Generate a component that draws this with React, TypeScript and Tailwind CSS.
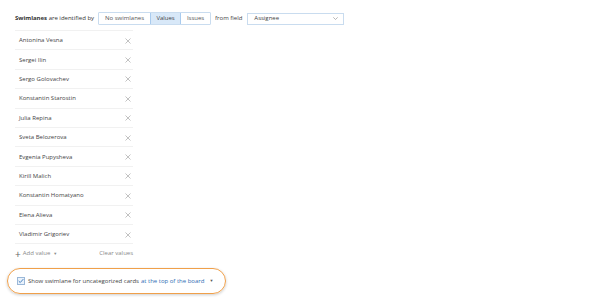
import React from "react";

const names = [
  "Antonina Vesna",
  "Sergei Ilin",
  "Sergo Golovachev",
  "Konstantin Starostin",
  "Julia Repina",
  "Sveta Belozerova",
  "Evgenia Pupysheva",
  "Kirill Malich",
  "Konstantin Homatyano",
  "Elena Alieva",
  "Vladimir Grigoriev",
];

function XIcon() {
  return (
    <svg width="6" height="6" viewBox="0 0 6 6" className="block">
      <path d="M0.5 0.5 L5.5 5.5 M5.5 0.5 L0.5 5.5" stroke="#a8a8a8" strokeWidth="0.7" fill="none" />
    </svg>
  );
}

function Line() {
  return (
    <svg width="118" height="1" viewBox="0 0 118 1" className="block">
      <rect x="0" y="0" width="118" height="1" fill="#f1f1f1" />
    </svg>
  );
}

export default function App() {
  return (
    <div
      className="w-[600px] h-[308px] bg-white text-[6px] text-[#444] overflow-hidden whitespace-nowrap"
      style={{ fontFamily: '"Open Sans", "Noto Sans", sans-serif' }}
    >
      <div className="pl-[15px] pt-[12px] flex items-center h-[13px] box-content">
        <span className="text-[#333]">
          <span className="font-bold">Swimlanes</span> are identified by
        </span>
        <div className="ml-[4px] flex h-[13px] border border-[#c9dcef] rounded-[1px]">
          <div className="w-[51px] flex items-center justify-center text-[#555]">No swimlanes</div>
          <div className="w-[31px] flex items-center justify-center bg-[#d8e8f8] border-0 border-x border-[#a9cbee] text-[#444]">Values</div>
          <div className="w-[29px] flex items-center justify-center text-[#555]">Issues</div>
        </div>
        <span className="ml-[4px] text-[#444]">from field</span>
        <div className="ml-[5px] w-[97px] h-[12px] border border-[#c9dcef] flex items-center justify-between pl-[6px] pr-[5px]">
          <span className="text-[#444]">Assignee</span>
          <svg width="5" height="3" viewBox="0 0 5 3">
            <path d="M0.3 0.3 L2.5 2.5 L4.7 0.3" stroke="#999" strokeWidth="0.7" fill="none" />
          </svg>
        </div>
      </div>

      <div className="ml-[15px] mt-[5px] w-[118px] flex flex-col">
        <div className="border-0 border-t border-[#f1f1f1]" />
        {names.map((n) => (
          <div key={n} className="h-[19.4px] flex items-center justify-between pl-[4px] pr-[2px] pt-[1px] border-0 border-b border-solid border-b-[#f1f1f1]">
            <span>{n}</span>
            <XIcon />
          </div>
        ))}
        <div className="h-[19px] flex items-center text-[#8a8a8a]">
          <span className="text-[10px] leading-none text-[#666] mr-[2px]">+</span>
          <span>Add value</span>
          <span className="ml-[3px] text-[4px]">▼</span>
          <span className="ml-[42px]">Clear values</span>
        </div>
      </div>

      <div className="ml-[7px] mt-[5px] w-[219px] h-[26px] border-[1.5px] border-[#f0a04a] rounded-[13px] shadow-[0_1px_3px_rgba(0,0,0,0.2)] flex items-center pl-[9px]">
        <div className="w-[8px] h-[8px] border border-[#9bb8d8] bg-[#eaf2fb] flex items-center justify-center">
          <svg width="7" height="6" viewBox="0 0 7 6">
            <path d="M0.8 3 L2.6 4.8 L6.2 0.8" stroke="#2b6fb6" strokeWidth="1" fill="none" />
          </svg>
        </div>
        <span className="ml-[3px] text-[#444]">Show swimlane for uncategorized cards</span>
        <span className="ml-[2px] text-[#2e6db4]">at the top of the board</span>
        <span className="ml-[5px] text-[4px] text-[#555]">▼</span>
      </div>
    </div>
  );
}
